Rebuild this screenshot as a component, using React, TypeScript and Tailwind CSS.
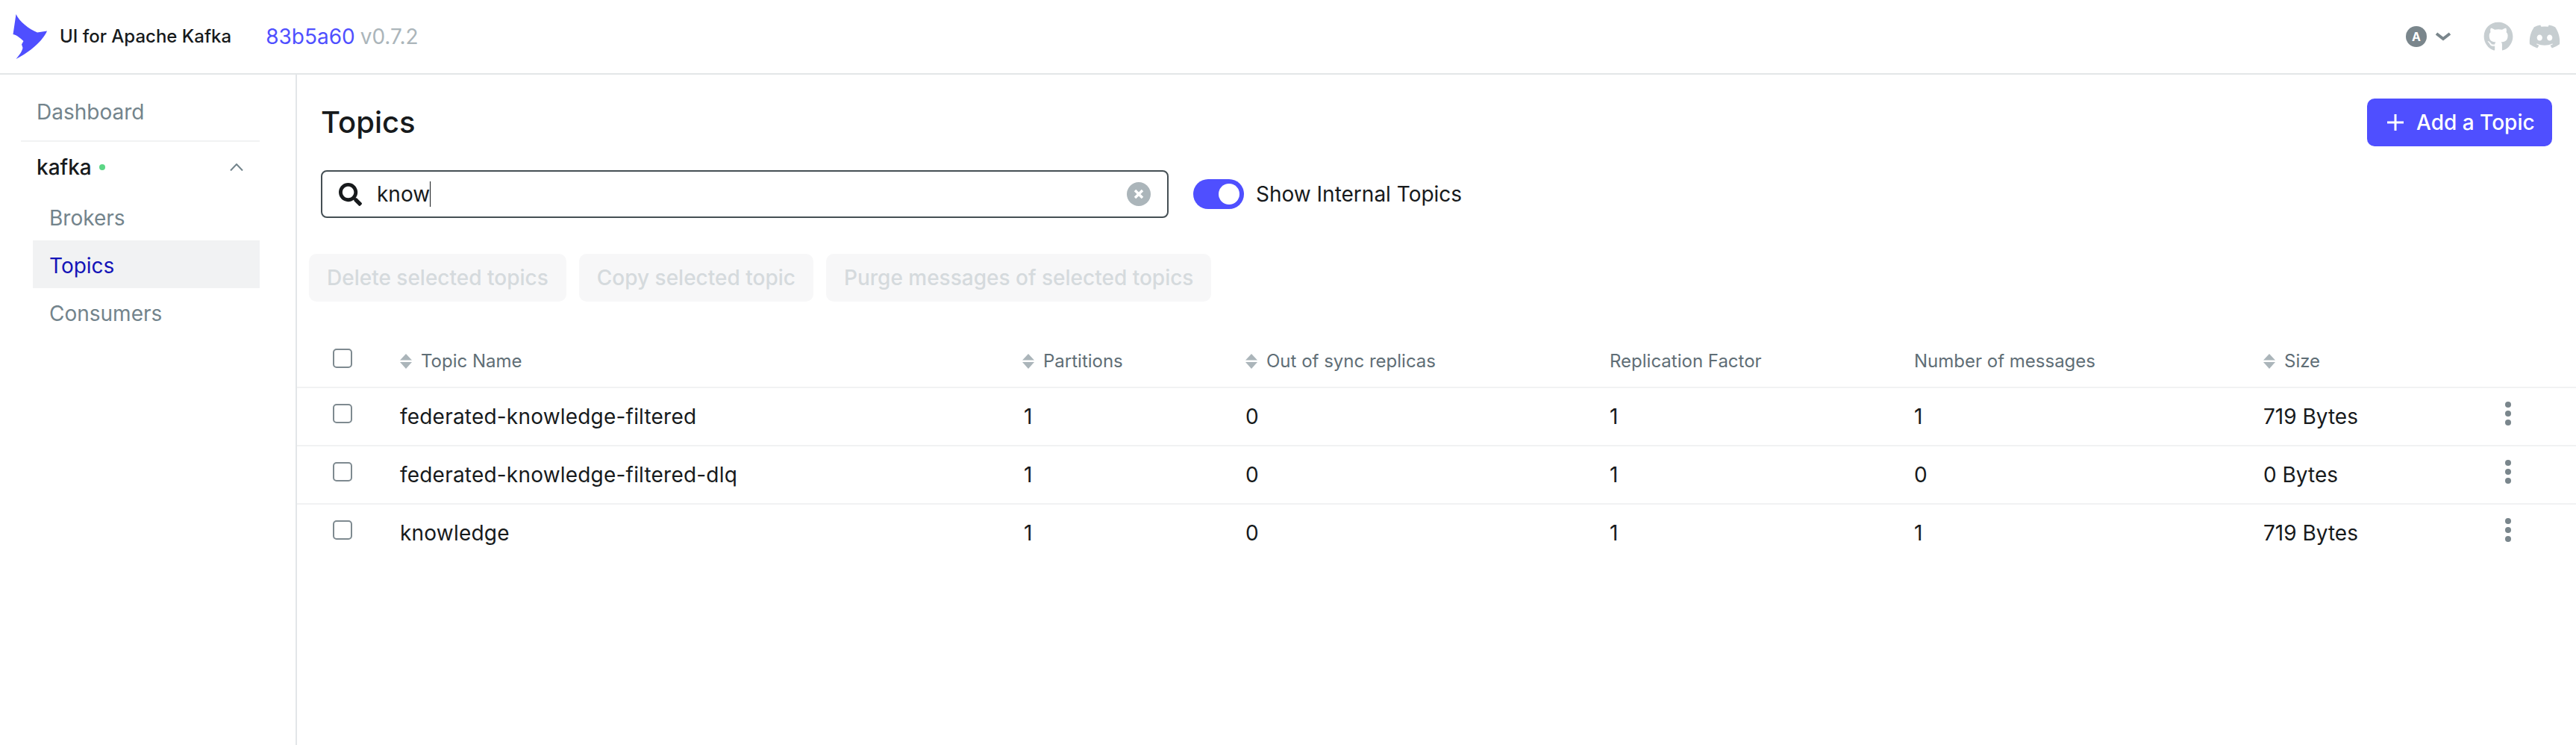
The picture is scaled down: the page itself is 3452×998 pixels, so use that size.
import React from 'react';
import { FaDiscord, FaGithub, FaSearch } from 'react-icons/fa';

const topics = [
  { name: 'federated-knowledge-filtered', partitions: 1, outOfSync: 0, replication: 1, messages: 1, size: '719 Bytes' },
  { name: 'federated-knowledge-filtered-dlq', partitions: 1, outOfSync: 0, replication: 1, messages: 0, size: '0 Bytes' },
  { name: 'knowledge', partitions: 1, outOfSync: 0, replication: 1, messages: 1, size: '719 Bytes' },
];

const Logo = () => (
  <svg width="48" height="62" viewBox="17 17 48 62" className="shrink-0 fill-[#4f4fff]">
    <path d="M21.5 18C26 28 39 38 50 42.5L63 40.5C58 53 40 69 21.5 78C26 73 30 67 30.5 63L29 58.5L31.5 54C27 50 23 46 17.5 45Z" />
  </svg>
);

const SortArrows = () => (
  <svg width="16" height="20" viewBox="0 0 16 20" className="shrink-0 fill-[#abb5ba]">
    <path d="M8 0L16 8.5H0Z" />
    <path d="M8 20L0 11H16Z" />
  </svg>
);

const Checkbox = () => (
  <div className="ml-[48px] mb-[8px] w-[26px] h-[26px] rounded-[5px] border-2 border-[#7e8a90] bg-white" />
);

const Dots = () => (
  <svg width="10" height="34" viewBox="0 0 10 34" className="fill-[#7a868c]">
    <circle cx="5" cy="5" r="4" />
    <circle cx="5" cy="17" r="4" />
    <circle cx="5" cy="29" r="4" />
  </svg>
);

const gridCols = 'grid grid-cols-[138px_834px_299px_488px_408px_468px_323px_1fr] items-center';

export default function App() {
  return (
    <div className="h-screen flex flex-col bg-white text-[28px] text-[#171a1c] font-['Inter',sans-serif]">
      <header className="h-[100px] shrink-0 flex items-center border-b-2 border-[#e3e6e8] pl-[17px] pr-[20px]">
        <Logo />
        <span className="ml-[15px] text-[24px] font-medium text-[#171a1c]">UI for Apache Kafka</span>
        <span className="ml-[46px] text-[#4f4fff]">83b5a60</span>
        <span className="ml-[7px] text-[#abb5ba]">v0.7.2</span>
        <div className="ml-auto flex items-center">
          <div className="w-[28px] h-[28px] rounded-full bg-[#7a868c] flex items-center justify-center text-[16px] font-bold text-white">A</div>
          <svg width="22" height="12" viewBox="0 0 22 12" className="ml-[11px] fill-none stroke-[#7a868c] stroke-[4]">
            <path d="M2 2L11 9L20 2" />
          </svg>
          <FaGithub className="ml-[43px] w-[40px] h-[40px] text-[#c7ced1]" />
          <FaDiscord className="ml-[20px] w-[44px] h-[44px] text-[#c7ced1]" />
        </div>
      </header>
      <div className="flex flex-1 min-h-0">
        <aside className="w-[398px] shrink-0 border-r-2 border-[#e3e6e8] pt-[18px] pl-[28px] pr-[48px]">
          <div className="h-[64px] flex items-center pl-[21px] text-[#73848c]">Dashboard</div>
          <div className="mt-[6px] h-[2px] bg-[#f1f2f3]" />
          <div className="mt-[2px] h-[64px] flex items-center pl-[21px] pr-[22px] font-medium">
            kafka
            <span className="ml-[10px] w-[8px] h-[8px] rounded-full bg-[#5cd685]" />
            <svg width="18" height="10" viewBox="0 0 18 10" className="ml-auto fill-none stroke-[#73848c] stroke-2">
              <path d="M1 9.5L9 1L17 9.5" />
            </svg>
          </div>
          <div className="ml-[16px] mt-[2px]">
            <div className="h-[64px] flex items-center pl-[22px] pt-[3px] text-[#73848c]">Brokers</div>
            <div className="h-[64px] flex items-center pl-[22px] pt-[3px] bg-[#f1f2f3] text-[#1414b8]">Topics</div>
            <div className="h-[64px] flex items-center pl-[22px] pt-[3px] text-[#73848c]">Consumers</div>
          </div>
        </aside>
        <main className="flex-1 min-w-0">
          <div className="mt-[32px] h-[64px] flex items-center justify-between pl-[32px] pr-[32px]">
            <h1 className="text-[40px] font-medium text-[#171a1c]">Topics</h1>
            <button className="w-[248px] h-[64px] rounded-[10px] bg-[#4f4fff] flex items-center pl-[27px] font-medium text-white">
              <svg width="22" height="22" viewBox="0 0 22 22" className="fill-none stroke-white stroke-[3]">
                <path d="M11 0V22M0 11H22" />
              </svg>
              <span className="ml-[17px]">Add a Topic</span>
            </button>
          </div>
          <div className="mt-[32px] h-[64px] flex items-center pl-[32px]">
            <div className="w-[1136px] h-[64px] rounded-[8px] border-2 border-[#454f54] flex items-center pl-[22px] pr-[22px]">
              <FaSearch className="w-[31px] h-[31px] text-[#171a1c]" />
              <span className="ml-[20px]">know</span>
              <span className="w-[1px] h-[34px] bg-[#171a1c]" />
              <svg width="32" height="32" viewBox="0 0 32 32" className="ml-auto">
                <circle cx="16" cy="16" r="16" className="fill-[#abb5ba]" />
                <path d="M11 11L21 21M21 11L11 21" className="fill-none stroke-white stroke-[3.5]" />
              </svg>
            </div>
            <div className="ml-[33px] w-[68px] h-[40px] rounded-full bg-[#4f4fff] flex items-center pl-[34px]">
              <div className="w-[28px] h-[28px] rounded-full bg-white" />
            </div>
            <span className="ml-[16px]">Show Internal Topics</span>
          </div>
          <div className="mt-[48px] pl-[16px] flex gap-[17px]">
            {['Delete selected topics', 'Copy selected topic', 'Purge messages of selected topics'].map((label) => (
              <button key={label} className="h-[64px] px-[24px] rounded-[10px] bg-[#f7f7f8] font-medium text-[#d5dadd]">
                {label}
              </button>
            ))}
          </div>
          <div className={`${gridCols} mt-[46px] h-[70px] border-b-2 border-[#f1f2f3] text-[24px] text-[#5f6e76]`}>
            <Checkbox />
            <div className="flex items-center gap-[12px]"><SortArrows />Topic Name</div>
            <div className="flex items-center gap-[12px]"><SortArrows />Partitions</div>
            <div className="flex items-center gap-[12px]"><SortArrows />Out of sync replicas</div>
            <div>Replication Factor</div>
            <div>Number of messages</div>
            <div className="flex items-center gap-[12px]"><SortArrows />Size</div>
            <div />
          </div>
          {topics.map((topic, i) => (
            <div
              key={topic.name}
              className={`${gridCols} h-[78px] border-b-2 ${i < topics.length - 1 ? 'border-[#f1f2f3]' : 'border-transparent'}`}
            >
              <Checkbox />
              <div className="tracking-[0.2px]">{topic.name}</div>
              <div className="pl-[2px]">{topic.partitions}</div>
              <div>{topic.outOfSync}</div>
              <div>{topic.replication}</div>
              <div>{topic.messages}</div>
              <div>{topic.size}</div>
              <div className="mb-[8px] flex"><Dots /></div>
            </div>
          ))}
        </main>
      </div>
    </div>
  );
}
